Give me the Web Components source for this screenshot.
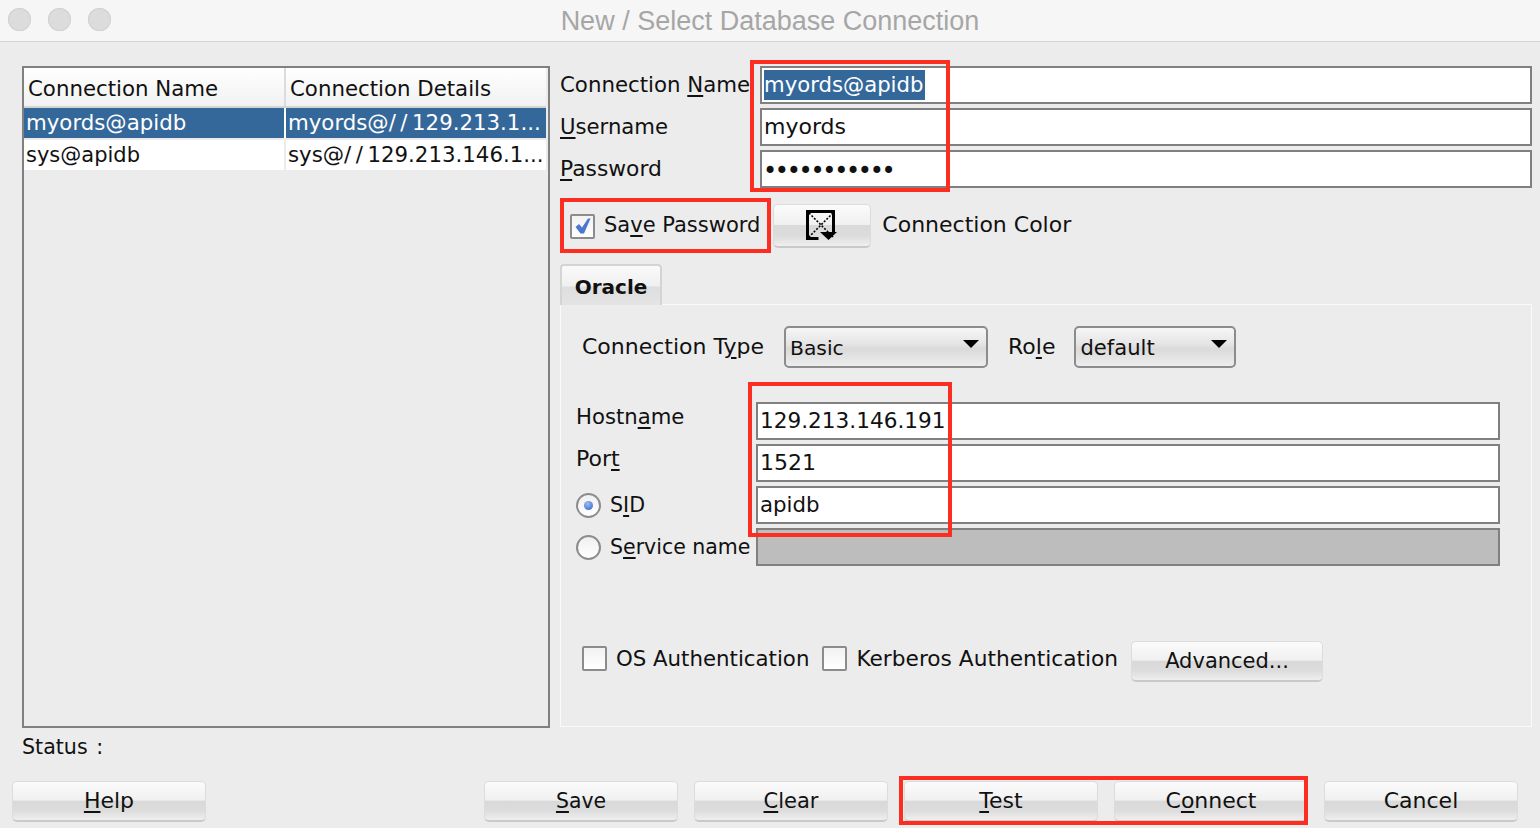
<!DOCTYPE html>
<html>
<head>
<meta charset="utf-8">
<title>New / Select Database Connection</title>
<style>
html,body{margin:0;padding:0;height:828px;overflow:hidden;background:#ececec;}
body{font:22px/28px "DejaVu Sans",sans-serif;color:#111;}
u{text-decoration-thickness:2px;text-underline-offset:3px;}
</style>
</head>
<body>
<dlg-window>
  <dlg-main>
    <conn-table slot="left"></conn-table>
    <dlg-form slot="right">
      <field-row><span slot="label" style="font-size:21.3px">Connection <u>N</u>ame</span><text-field selected style="font-size:21.2px">myords@apidb</text-field></field-row>
      <field-row><span slot="label" style="font-size:21.2px"><u>U</u>sername</span><text-field>myords</text-field></field-row>
      <field-row><span slot="label" style="font-size:21.8px"><u>P</u>assword</span><text-field dots>•••••••••••</text-field></field-row>
      <save-row></save-row>
      <tab-panel>
        <conn-line>
          <span class="t1">Connection T<u>y</u>pe</span>
          <combo-box w="204"><span style="font-size:20.3px">Basic</span></combo-box>
          <span class="t2">Ro<u>l</u>e</span>
          <combo-box w="162"><span style="font-size:21.1px">default</span></combo-box>
        </conn-line>
        <host-grid></host-grid>
        <auth-line></auth-line>
      </tab-panel>
    </dlg-form>
  </dlg-main>
  <status-line>Status <span style="margin-left:2px">:</span></status-line>
  <button-bar></button-bar>
  <red-mark style="left:750px;top:60px;width:200px;height:132px"></red-mark>
  <red-mark style="left:560px;top:198px;width:211px;height:55px"></red-mark>
  <red-mark style="left:748px;top:382px;width:204px;height:155px"></red-mark>
  <red-mark style="left:899px;top:776px;width:409px;height:49px"></red-mark>
</dlg-window>

<script>
function makeEl(name, html, init){
  customElements.define(name, class extends HTMLElement{
    constructor(){
      super();
      this.attachShadow({mode:"open"});
      this.shadowRoot.innerHTML = html;
      if(init) init(this);
    }
  });
}
const uCss = "u{text-decoration-thickness:2px;text-underline-offset:3px;}";

makeEl("dlg-window", `
<style>
:host{display:block;position:relative;width:1540px;height:828px;overflow:hidden;background:#ececec;}
.bar{height:41px;background:#f6f6f6;border-bottom:1px solid #d4d4d4;position:relative;display:flex;align-items:center;justify-content:center;}
.dots{position:absolute;left:8px;top:8px;display:flex;gap:17px;}
.dots i{width:23px;height:23px;border-radius:50%;background:#dcdcdc;box-shadow:inset 0 0 0 1px #d2d2d2;display:block;}
.ttl{font:27px/31px "Liberation Sans",sans-serif;color:#a6a6a6;margin-top:1px;}
</style>
<div class="bar"><div class="dots"><i></i><i></i><i></i></div><div class="ttl">New / Select Database Connection</div></div>
<slot></slot>`);

makeEl("dlg-main", `
<style>
:host{display:flex;gap:10px;padding:24px 8px 0 22px;}
</style>
<slot name="left"></slot><slot name="right"></slot>`);

makeEl("conn-table", `
<style>
:host{display:block;width:524px;height:658px;border:2px solid #808080;background:#ececec;font-size:21.3px;}
.r{display:grid;grid-template-columns:260px 2px 1fr;margin-right:2px;}
.h{height:38px;background:linear-gradient(#fff,#f1f1f1);border-bottom:2px solid #d4d4d4;}
.h div{padding:7px 0 0 4px;line-height:28px;}
.h b{background:#dcdcdc;}
.c{height:30px;background:#fff;margin-bottom:2px;}
.c div{padding-left:2px;line-height:30px;white-space:nowrap;overflow:hidden;}
.c b{background:#ececec;}
.sel{background:#35689a;color:#fff;}
.sel b{background:#fff;}
.sl{letter-spacing:4.5px;}
</style>
<div class="r h"><div>Connection Name</div><b></b><div>Connection Details</div></div>
<div class="r c sel"><div>myords@apidb</div><b></b><div>myords@<span class="sl">//</span>129.213.1...</div></div>
<div class="r c"><div style="font-size:21px">sys@apidb</div><b></b><div>sys@<span class="sl">//</span>129.213.146.1...</div></div>`);

makeEl("dlg-form", `
<style>:host{display:flex;flex-direction:column;width:972px;gap:4px;}</style>
<slot></slot>`);

makeEl("field-row", `
<style>
:host{display:grid;grid-template-columns:200px 1fr;align-items:center;}
</style>
<slot name="label"></slot><slot></slot>`);

makeEl("text-field", `
<style>
:host{display:block;box-sizing:border-box;height:38px;border:2px solid #808080;background:#fff;padding:0 2px;line-height:34px;white-space:nowrap;overflow:hidden;}
:host([disabled]){background:#bdbdbd;}
:host([selected]) span{background:#35689a;color:#fff;display:inline-block;height:30px;line-height:30px;padding-right:2px;}
:host([dots]) span{letter-spacing:-2.3px;font-size:24px;position:relative;top:2px;margin-left:-1px;}
</style>
<span><slot></slot></span>`);

makeEl("push-btn", `
<style>
:host{display:flex;box-sizing:border-box;align-items:center;justify-content:center;height:41px;border:1px solid #dcdcdc;border-bottom:2px solid #c9c9c9;border-radius:5px;
background:linear-gradient(#fbfbfb 0,#f0f0f0 48%,#d9d9d9 50%,#dcdcdc 75%,#efefef 100%);}
</style>
<slot></slot>`);

makeEl("check-box", `
<style>
:host{display:inline-flex;align-items:center;gap:9px;}
.b{box-sizing:border-box;width:25px;height:25px;border:2px solid #8c8c8c;border-radius:2px;background:linear-gradient(#f2f2f2,#fff);display:block;flex:none;}
svg{display:block;margin:1px;}
</style>
<span class="b"></span><span><slot></slot></span>`, el => {
  if(el.hasAttribute("checked")){
    el.shadowRoot.querySelector(".b").innerHTML = '<svg width="19" height="19" viewBox="0 0 19 19"><path d="M2.500 10l3.500-3 3 3.500 6-9h2.500l-6.500 15h-3.500z" fill="#4a78d0"/></svg>';
  }
});

makeEl("save-row", `
<style>
${uCss}
:host{display:flex;align-items:center;height:44px;margin-top:12px;padding-left:10px;}
.txt{font-size:21px;position:relative;top:-1px;}
.col{width:98px;margin-left:13px;}
svg{display:block;}
.lbl{margin-left:11px;margin-bottom:2px;}
</style>
<check-box checked><span class="txt">Sa<u>v</u>e Password</span></check-box>
<push-btn class="col" style="height:44px"><svg width="32" height="32" viewBox="0 0 32 32">
<path d="M1.500 23V1.500h26V22M1.500 22v6.500h11" fill="none" stroke="#000" stroke-width="3"/>
<path d="M3 3L27 27M27 3L3 27" fill="none" stroke="#000" stroke-width="1.600" stroke-dasharray="2 1.600"/>
<path d="M14 22h17l-8.500 8z" fill="#000"/></svg></push-btn>
<span class="lbl">Connection Color</span>`);

makeEl("tab-panel", `
<style>
:host{display:block;margin-top:12px;}
.tab{box-sizing:border-box;width:102px;height:41px;border:2px solid #d4d4d4;border-bottom:0;border-radius:4px 4px 0 0;background:linear-gradient(#fafafa,#f0f0f0 50%,#dedede 55%,#e4e4e4);font-weight:bold;text-align:center;line-height:42px;font-size:20px;margin-bottom:-1px;position:relative;}
.body{box-sizing:border-box;height:423px;border:1px solid #fafafa;padding:21px 0 0 0;}
</style>
<div class="tab">Oracle</div>
<div class="body"><slot></slot></div>`);

makeEl("conn-line", `
<style>
:host{display:flex;align-items:center;height:42px;padding-left:21px;}
::slotted(.t1){width:202px;}
::slotted(.t2){margin:0 19px 0 20px;}
</style>
<slot></slot>`);

makeEl("combo-box", `
<style>
:host{display:flex;box-sizing:border-box;height:42px;align-items:center;justify-content:space-between;padding:2px 7px 0 4px;border:2px solid #8c8c8c;border-radius:5px;background:linear-gradient(#f6f6f6,#e6e6e6 40%,#dadada 55%,#ededed);}
i{display:block;width:0;height:0;border:8px solid transparent;border-top:8px solid #000;border-bottom:0;margin-top:-8px;}
</style>
<span><slot></slot></span><i></i>`, el => {
  el.style.width = el.getAttribute("w") + "px";
});

makeEl("radio-dot", `
<style>
:host{display:inline-flex;align-items:center;gap:9px;white-space:nowrap;}
.o{box-sizing:border-box;width:25px;height:25px;border:2px solid #8c8c8c;border-radius:50%;background:linear-gradient(#f0f0f0,#fff);display:flex;align-items:center;justify-content:center;}
:host([on]) .o::after{content:"";width:9px;height:9px;border-radius:50%;background:radial-gradient(circle at 40% 30%,#9fbdf0,#2c5fc9);}
</style>
<span class="o"></span><span><slot></slot></span>`);

makeEl("host-grid", `
<style>
${uCss}
:host{display:grid;grid-template-columns:180px 744px;row-gap:4px;margin-top:34px;padding-left:15px;align-items:center;}
.lb{margin-top:-8px;}
</style>
<span class="lb" style="font-size:21.2px">Hostn<u>a</u>me</span><text-field style="font-size:21.6px">129.213.146.191</text-field>
<span class="lb">Por<u>t</u></span><text-field>1521</text-field>
<radio-dot on><span style="font-size:20.6px">S<u>I</u>D</span></radio-dot><text-field style="font-size:21.3px">apidb</text-field>
<radio-dot><span style="font-size:20.5px">S<u>e</u>rvice name</span></radio-dot><text-field disabled></text-field>`);

makeEl("auth-line", `
<style>
:host{display:flex;align-items:center;height:41px;margin-top:72px;padding-left:21px;}
check-box{margin-right:13px;}
push-btn{width:192px;margin-top:5px;font-size:21px;}
</style>
<check-box><span style="font-size:21.3px">OS Authentication</span></check-box>
<check-box><span style="font-size:21.7px">Kerberos Authentication</span></check-box>
<push-btn>Advanced...</push-btn>`);

makeEl("status-line", `
<style>:host{display:block;padding:5px 0 0 22px;height:30px;line-height:28px;font-size:20.6px;}</style>
<slot></slot>`);

makeEl("button-bar", `
<style>
${uCss}
:host{display:flex;padding:18px 22px 0 12px;gap:16px;}
push-btn{width:194px;}
.sp{flex:1;}
</style>
<push-btn><span><u>H</u>elp</span></push-btn><span class="sp"></span>
<push-btn><span style="font-size:20.4px"><u>S</u>ave</span></push-btn>
<push-btn><span style="font-size:21px"><u>C</u>lear</span></push-btn>
<push-btn><span><u>T</u>est</span></push-btn>
<push-btn><span>C<u>o</u>nnect</span></push-btn>
<push-btn><span>Cancel</span></push-btn>`);

// red boxes drawn over the screenshot
makeEl("red-mark", `
<style>:host{display:block;position:absolute;box-sizing:border-box;border:4px solid #fc2d21;pointer-events:none;}</style>`);
</script>
</body>
</html>
